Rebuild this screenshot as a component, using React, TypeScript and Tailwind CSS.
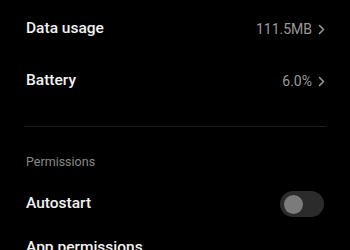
const Chevron = () => (
  <svg width="7" height="11" viewBox="0 0 7 11" className="ml-[6px]">
    <polyline points="1.5,1.5 5.5,5.5 1.5,9.5" fill="none" stroke="#9a9a9a" strokeWidth="1.6" strokeLinecap="round" strokeLinejoin="round" />
  </svg>
);

const ValueRow = ({ label, value }: { label: string; value: string }) => (
  <div className="h-[52px] flex items-center justify-between pl-[26px] pr-[25px]">
    <span className="text-[15.5px] font-medium text-[#f2f2f2]">{label}</span>
    <div className="flex items-center">
      <span className="text-[14px] text-[#9a9a9a]">{value}</span>
      <Chevron />
    </div>
  </div>
);

export default function App() {
  return (
    <div className="w-[350px] h-[250px] overflow-hidden bg-black" style={{ fontFamily: "Roboto, 'Noto Sans', sans-serif" }}>
      <div className="pt-[3px]">
        <ValueRow label="Data usage" value="111.5MB" />
        <ValueRow label="Battery" value="6.0%" />
      </div>

      <div className="mt-[19px] mx-6 h-px bg-[#1e1e1e]" />

      <div className="mt-[27px] pl-[26px] text-[12.5px] leading-[16px] text-[#8a8a8a]">Permissions</div>

      <div className="mt-[12px] h-[44px] flex items-center justify-between pl-[26px] pr-[26px]">
        <span className="text-[15.5px] font-medium text-[#f2f2f2]">Autostart</span>
        <div className="w-[44px] h-[26px] rounded-full bg-[#2b2b2b] flex items-center pl-[4px]">
          <div className="w-[19px] h-[19px] rounded-full bg-[#7b7b7b]" />
        </div>
      </div>

      <div className="h-[44px] flex items-center pl-[26px]">
        <span className="text-[15.5px] font-medium text-[#f2f2f2]">App permissions</span>
      </div>
    </div>
  );
}
